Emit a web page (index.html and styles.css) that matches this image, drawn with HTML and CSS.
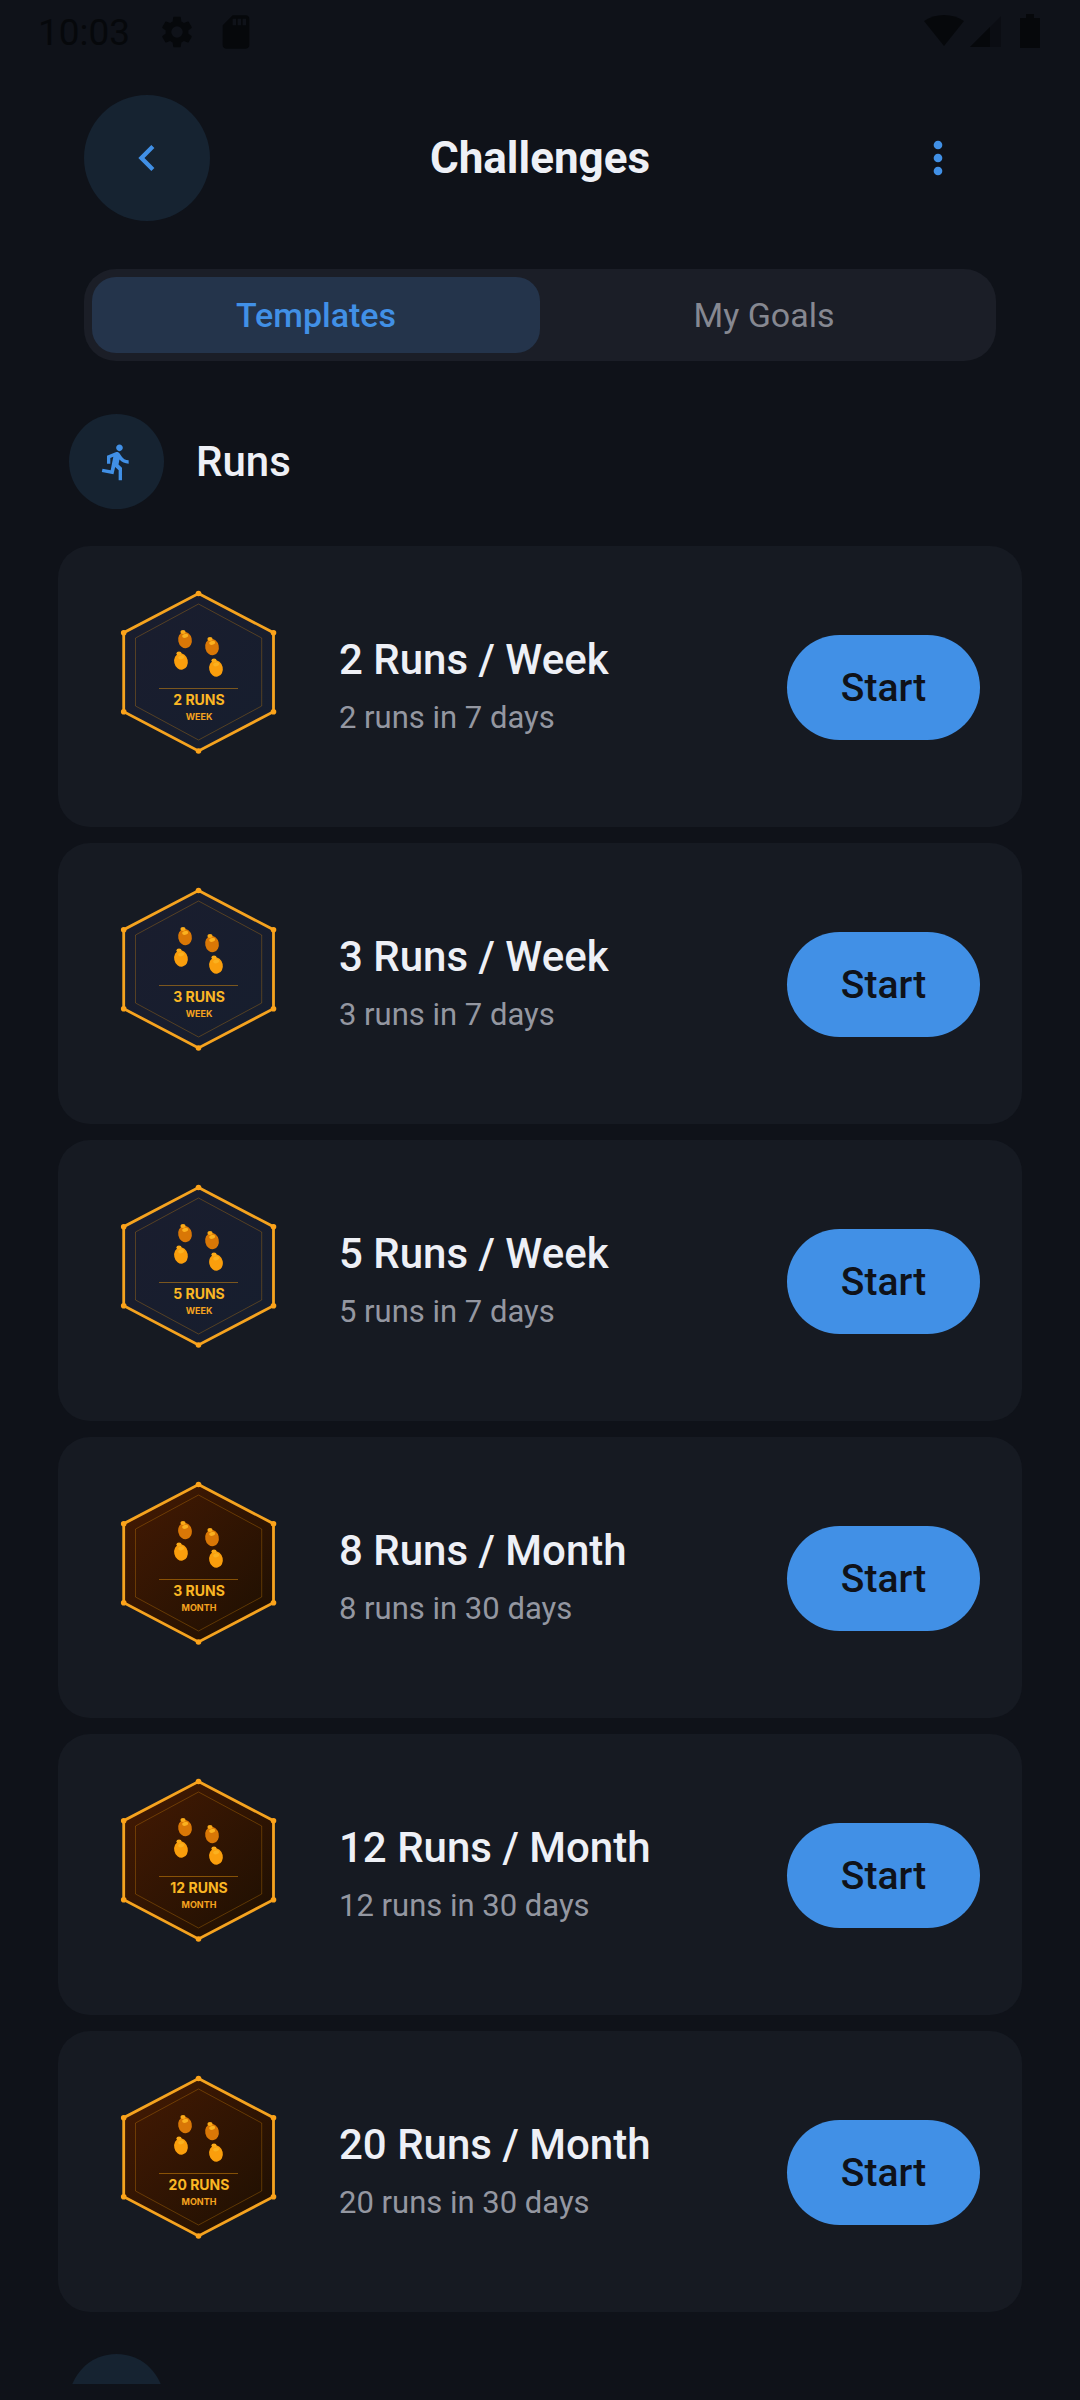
FILE: index.html
```html
<!DOCTYPE html>
<html lang="en">
  <head>
    <meta charset="UTF-8" />
    <meta name="viewport" content="width=device-width, initial-scale=1" />
    <title>Challenges</title>
    <link rel="stylesheet" href="styles.css" />
  </head>

  <body>
    <!-- shared badge artwork -->
    <svg class="sprite" aria-hidden="true">
      <defs>
        <linearGradient id="night" x1="0" y1="0" x2="1" y2="1">
          <stop offset="0" stop-color="#1a1d2e" />
          <stop offset="1" stop-color="#161e2e" />
        </linearGradient>
        <linearGradient id="ember" x1="0" y1="0" x2="1" y2="1">
          <stop offset="0" stop-color="#451a03" />
          <stop offset="1" stop-color="#1c0f02" />
        </linearGradient>
        <g id="egg">
          <ellipse rx="6.8" ry="8.3" transform="rotate(-12)" />
          <ellipse cx="-2" cy="-8" rx="2.6" ry="2" fill="#fbab18" />
          <ellipse cx="1" cy="-4" rx="3" ry="1.9" fill="#fbb11f" transform="rotate(-12)" />
        </g>
        <g id="badge">
          <path d="M98.500 23.500L173.500 62.700V141.700L98.500 181L23.700 141.700V62.700Z" stroke="#f5a31f" stroke-width="2.800" />
          <path d="M98.500 34L161.700 68V136L98.500 170L35.500 136V68Z" fill="none" stroke="#f59e0b" stroke-opacity=".35" stroke-width=".8" />
          <g fill="#fca31a">
            <circle cx="98.500" cy="23.500" r="2.800" />
            <circle cx="173.500" cy="62.700" r="2.800" />
            <circle cx="173.500" cy="141.700" r="2.800" />
            <circle cx="98.500" cy="181" r="2.800" />
            <circle cx="23.700" cy="141.700" r="2.800" />
            <circle cx="23.700" cy="62.700" r="2.800" />
          </g>
          <use href="#egg" x="85" y="70" fill="#d97706" />
          <use href="#egg" x="112" y="77" fill="#d97706" />
          <use href="#egg" x="81" y="91.500" fill="#fa9e0c" />
          <use href="#egg" x="116" y="98.500" fill="#fa9e0c" />
          <path d="M59 118.500H138" stroke="#f59e0b" stroke-opacity=".45" />
        </g>
      </defs>
    </svg>

    <div class="screen">
      <div class="statusbar">
        <span class="clock">10:03</span>
        <svg class="gear" width="38" height="38" viewBox="0 0 24 24"><path d="M19.140 12.940c.04-.3.06-.61.06-.94s-.02-.64-.07-.94l2.030-1.580c.18-.14.23-.41.12-.61l-1.920-3.320c-.12-.22-.37-.29-.59-.22l-2.390.96c-.5-.38-1.030-.7-1.620-.94l-.36-2.540c-.04-.24-.24-.41-.48-.41h-3.840c-.24 0-.43.17-.47.41l-.36 2.540c-.59.24-1.130.57-1.620.94l-2.390-.96c-.22-.08-.47 0-.59.22L2.740 8.870c-.12.21-.08.47.12.61l2.030 1.580c-.05.3-.09.63-.09.94s.02.64.07.94l-2.030 1.580c-.18.14-.23.41-.12.61l1.920 3.320c.12.22.37.29.59.22l2.390-.96c.5.38 1.030.7 1.620.94l.36 2.540c.05.24.24.41.48.41h3.840c.24 0 .44-.17.47-.41l.36-2.540c.59-.24 1.130-.56 1.620-.94l2.390.96c.22.08.47 0 .59-.22l1.920-3.320c.12-.22.07-.47-.12-.61l-2.010-1.580zM12 15.600a3.600 3.600 0 1 1 0-7.200 3.600 3.600 0 0 1 0 7.200z" /></svg>
        <svg class="sdcard" width="40" height="40" viewBox="0 0 24 24"><path d="M18 2h-8L4.020 8 4 20c0 1.100.9 2 2 2h12c1.100 0 2-.9 2-2V4c0-1.100-.9-2-2-2zm-6 6h-2V4h2v4zm3 0h-2V4h2v4zm3 0h-2V4h2v4z" /></svg>
        <svg class="signals" width="118" height="36" viewBox="0 0 118 36">
          <path d="M0 7C11-1 29-1 40 7L20 32Z" />
          <path d="M46 33L77 2V33Z" opacity=".4" />
          <path d="M46 33L66 13V33Z" />
          <path d="M96 4h6V0h8v4h6v30H96Z" />
        </svg>
      </div>

      <header class="header">
        <button class="back" aria-label="Back">
          <svg width="52" height="52" viewBox="0 0 24 24"><path d="M15.410 7.410L14 6l-6 6 6 6 1.410-1.410L10.830 12z" /></svg>
        </button>
        <h1>Challenges</h1>
        <button class="more" aria-label="More options">
          <svg width="52" height="52" viewBox="0 0 24 24"><circle cx="12" cy="6" r="2" /><circle cx="12" cy="12" r="2" /><circle cx="12" cy="18" r="2" /></svg>
        </button>
      </header>

      <nav class="tabs">
        <button class="tab active">Templates</button>
        <button class="tab">My Goals</button>
      </nav>

      <main class="list">
        <div class="section">
          <span class="section-icon">
            <svg width="40" height="40" viewBox="0 0 24 24"><path d="M13.490 5.480c1.100 0 2-.9 2-2s-.9-2-2-2-2 .9-2 2 .9 2 2 2zm-3.600 13.900l1-4.400 2.100 2v6h2v-7.500l-2.100-2 .6-3c1.300 1.500 3.300 2.500 5.500 2.500v-2c-1.900 0-3.500-1-4.300-2.400l-1-1.600c-.4-.6-1-1-1.700-1-.3 0-.5.1-.8.1l-5.200 2.200v4.700h2v-3.400l1.800-.7-1.600 8.100-4.900-1-.4 2 7 1.400z" /></svg>
          </span>
          <h2>Runs</h2>
        </div>

        <div class="cards">
          <article class="card">
            <svg class="badge" viewBox="14 17 168 168">
              <use href="#badge" fill="url(#night)" />
              <text class="badge-count" x="99" y="135">2 RUNS</text>
              <text class="badge-period" x="99" y="150">WEEK</text>
            </svg>
            <div class="info">
              <h3>2 Runs / Week</h3>
              <p>2 runs in 7 days</p>
            </div>
            <button class="start">Start</button>
          </article>

          <article class="card">
            <svg class="badge" viewBox="14 17 168 168">
              <use href="#badge" fill="url(#night)" />
              <text class="badge-count" x="99" y="135">3 RUNS</text>
              <text class="badge-period" x="99" y="150">WEEK</text>
            </svg>
            <div class="info">
              <h3>3 Runs / Week</h3>
              <p>3 runs in 7 days</p>
            </div>
            <button class="start">Start</button>
          </article>

          <article class="card">
            <svg class="badge" viewBox="14 17 168 168">
              <use href="#badge" fill="url(#night)" />
              <text class="badge-count" x="99" y="135">5 RUNS</text>
              <text class="badge-period" x="99" y="150">WEEK</text>
            </svg>
            <div class="info">
              <h3>5 Runs / Week</h3>
              <p>5 runs in 7 days</p>
            </div>
            <button class="start">Start</button>
          </article>

          <article class="card">
            <svg class="badge" viewBox="14 17 168 168">
              <use href="#badge" fill="url(#ember)" />
              <text class="badge-count" x="99" y="135">3 RUNS</text>
              <text class="badge-period" x="99" y="150">MONTH</text>
            </svg>
            <div class="info">
              <h3>8 Runs / Month</h3>
              <p>8 runs in 30 days</p>
            </div>
            <button class="start">Start</button>
          </article>

          <article class="card">
            <svg class="badge" viewBox="14 17 168 168">
              <use href="#badge" fill="url(#ember)" />
              <text class="badge-count" x="99" y="135">12 RUNS</text>
              <text class="badge-period" x="99" y="150">MONTH</text>
            </svg>
            <div class="info">
              <h3>12 Runs / Month</h3>
              <p>12 runs in 30 days</p>
            </div>
            <button class="start">Start</button>
          </article>

          <article class="card">
            <svg class="badge" viewBox="14 17 168 168">
              <use href="#badge" fill="url(#ember)" />
              <text class="badge-count" x="99" y="135">20 RUNS</text>
              <text class="badge-period" x="99" y="150">MONTH</text>
            </svg>
            <div class="info">
              <h3>20 Runs / Month</h3>
              <p>20 runs in 30 days</p>
            </div>
            <button class="start">Start</button>
          </article>
        </div>

        <div class="section">
          <span class="section-icon"></span>
        </div>
      </main>
    </div>
  </body>
</html>
```

FILE: styles.css
```css
* {
  box-sizing: border-box;
}
body {
  margin: 0;
  background: #0f1219;
  color: #eef0f6;
  font-family: Roboto, "Liberation Sans", sans-serif;
}
h1,
h2,
h3,
p {
  margin: 0;
}
button {
  border: 0;
  padding: 0;
  background: none;
  font-family: inherit;
  cursor: pointer;
}
svg {
  display: block;
}
.sprite {
  position: absolute;
  width: 0;
  height: 0;
}
.screen {
  display: flex;
  flex-direction: column;
  height: 100vh;
  padding-bottom: 16px;
}

/* status bar */
.statusbar {
  display: flex;
  align-items: center;
  height: 64px;
  padding: 0 38px;
  color: #06080b;
  fill: #06080b;
}
.clock {
  font-size: 37px;
}
.gear {
  margin-left: 28px;
}
.sdcard {
  margin-left: 20px;
}
.signals {
  margin-left: auto;
}

/* header */
.header {
  display: grid;
  grid-template-columns: 126px 1fr 126px;
  align-items: center;
  margin-top: 31px;
  padding: 0 84px;
  fill: #4190e6;
}
.header h1 {
  font-size: 44px;
  font-weight: 700;
  text-align: center;
}
.back,
.more {
  display: flex;
  align-items: center;
  justify-content: center;
  height: 126px;
}
.back {
  border-radius: 50%;
  background: #162331;
}
.more {
  padding-left: 10px;
}

/* tabs */
.tabs {
  display: flex;
  margin: 48px 84px 0;
  padding: 8px;
  border-radius: 32px;
  background: #1b1e27;
}
.tab {
  flex: 1;
  height: 76px;
  border-radius: 24px;
  color: #868891;
  font-size: 34px;
}
.tab.active {
  background: #24344b;
  color: #4190e6;
  font-weight: 500;
}

/* challenge list */
.list {
  flex: 1;
  min-height: 0;
  overflow: hidden;
  padding: 53px 58px 0;
}
.section {
  display: flex;
  align-items: center;
  gap: 32px;
  padding-left: 11px;
}
.section h2 {
  font-size: 42px;
  font-weight: 500;
}
.section-icon {
  display: flex;
  align-items: center;
  justify-content: center;
  width: 95px;
  height: 95px;
  border-radius: 50%;
  background: #162331;
  fill: #4190e6;
}
.cards {
  display: grid;
  gap: 16px;
  margin: 37px 0 42px;
}
.card {
  display: flex;
  align-items: center;
  height: 281px;
  padding: 2px 42px 0 56px;
  border-radius: 32px;
  background: #161a22;
}
.badge {
  width: 168px;
  height: 168px;
  margin-bottom: 33px;
}
.badge-count,
.badge-period {
  fill: #fbb724;
  font-family: Inter, sans-serif;
  font-weight: 700;
  text-anchor: middle;
}
.badge-count {
  font-size: 14px;
}
.badge-period {
  fill: #f5a31f;
  font-size: 9px;
}
.info {
  flex: 1;
  margin-left: 57px;
}
.info h3 {
  font-size: 42px;
  font-weight: 500;
  line-height: 60px;
}
.info p {
  color: #9497a1;
  font-size: 31px;
  line-height: 56px;
}
.start {
  width: 193px;
  height: 105px;
  border-radius: 53px;
  background: #4190e6;
  color: #0f1219;
  font-size: 39px;
  font-weight: 500;
}
```
